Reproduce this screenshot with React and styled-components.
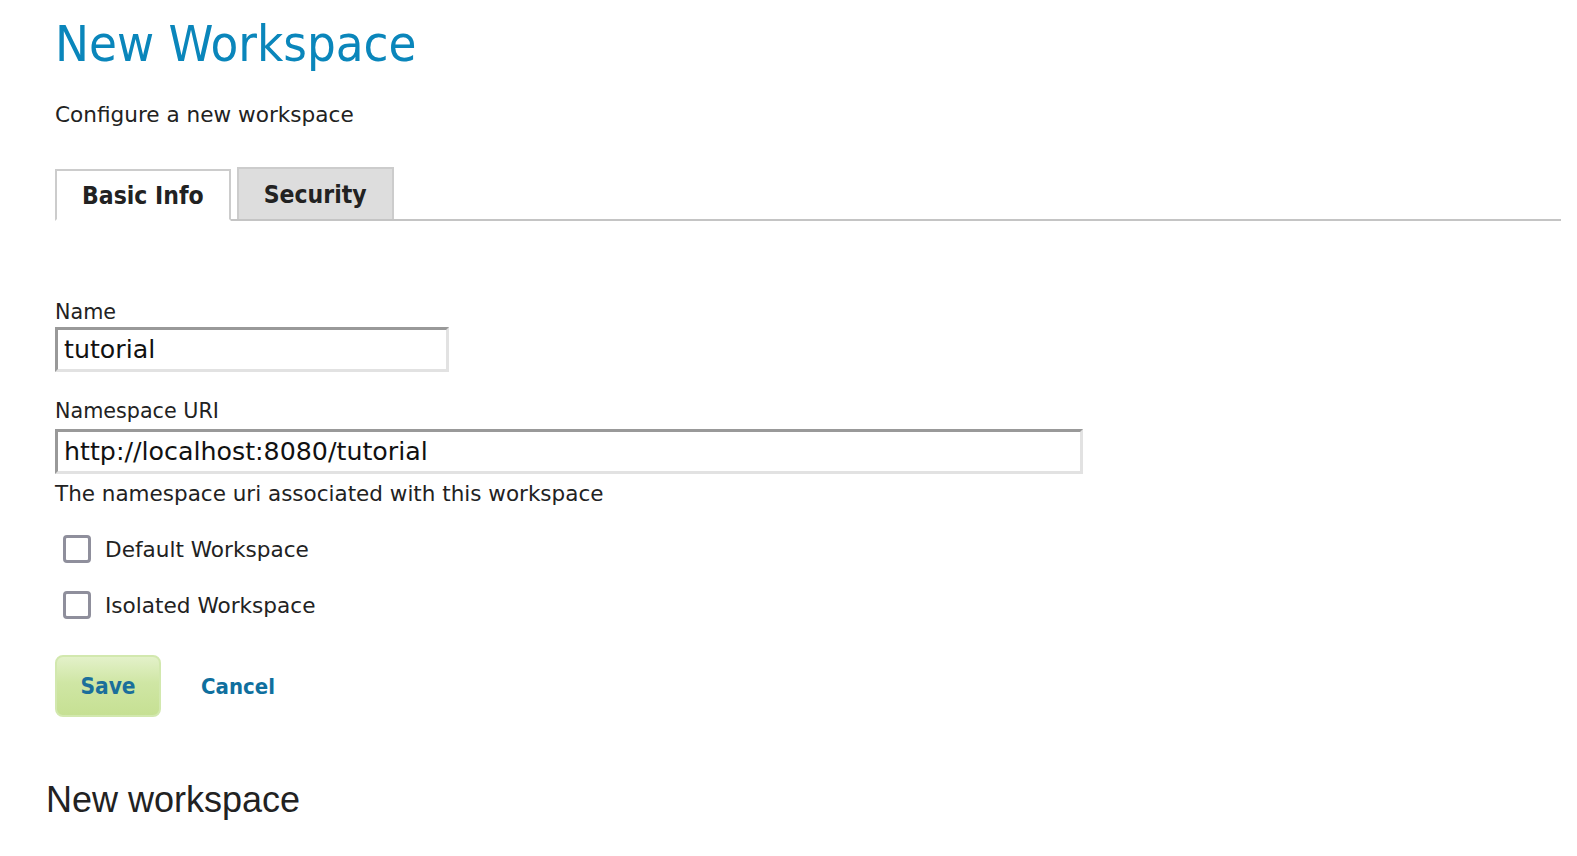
import React, { useState } from 'react';
import styled, { createGlobalStyle } from 'styled-components';

const GlobalStyle = createGlobalStyle`
  body {
    margin: 0;
    background: #ffffff;
    font-family: "DejaVu Sans", Verdana, sans-serif;
    color: #222222;
  }
`;

const Page = styled.div`
  padding: 0 16px 0 55px;
`;

const Title = styled.h1`
  margin: 0;
  padding-top: 12px;
  font-family: "DejaVu Sans Condensed", "DejaVu Sans", sans-serif;
  font-size: 50.5px;
  font-weight: normal;
  line-height: 64px;
  color: #0a86bb;
`;

const Subtitle = styled.p`
  margin: 25px 0 0 0;
  font-size: 21.6px;
  line-height: 28px;
  color: #222222;
`;

const TabBar = styled.div`
  display: flex;
  align-items: flex-end;
  gap: 6px;
  margin-top: 38px;
  border-bottom: 2px solid #c4c4c4;
`;

const Tab = styled.button`
  font-family: "DejaVu Sans Condensed", "DejaVu Sans", sans-serif;
  font-size: 24.5px;
  font-weight: bold;
  color: #222222;
  height: 52px;
  padding: 0 25px;
  margin-bottom: ${p => (p.active ? '-2px' : '0')};
  background: ${p => (p.active ? '#ffffff' : '#dddddd')};
  border: 2px solid #cccccc;
  border-bottom: ${p => (p.active ? '2px solid #ffffff' : 'none')};
  cursor: pointer;
`;

const Form = styled.form`
  margin-top: 76px;
`;

const Field = styled.div`
  display: flex;
  flex-direction: column;
  margin-bottom: 24px;
`;

const Label = styled.label`
  font-size: 20.7px;
  line-height: 30px;
  color: #222222;
`;

const TextInput = styled.input`
  box-sizing: border-box;
  width: ${p => p.width}px;
  height: 45px;
  margin-top: ${p => p.offset || 0}px;
  font-family: inherit;
  font-size: 25.3px;
  color: #111111;
  padding: 0 6px;
  border-style: solid;
  border-width: 3px;
  border-color: #999999 #e2e2e2 #e2e2e2 #999999;
  outline: none;
`;

const Help = styled.div`
  font-size: 21.5px;
  line-height: 30px;
  color: #222222;
  margin-top: 5px;
`;

const CheckRow = styled.label`
  display: flex;
  align-items: center;
  gap: 14px;
  padding-left: 8px;
  height: 28px;
  margin-top: ${p => p.gap}px;
  font-size: 21.6px;
  color: #222222;
  cursor: pointer;
`;

const Box = styled.span`
  box-sizing: border-box;
  width: 28px;
  height: 28px;
  border: 3px solid #8f8f9c;
  border-radius: 4px;
  background: ${p => (p.checked ? '#8f8f9c' : '#ffffff')};
`;

const Actions = styled.div`
  display: flex;
  align-items: center;
  gap: 40px;
  margin-top: 36px;
`;

const SaveButton = styled.button`
  box-sizing: border-box;
  width: 106px;
  height: 62px;
  font-family: "DejaVu Sans Condensed", "DejaVu Sans", sans-serif;
  font-size: 22.5px;
  font-weight: bold;
  color: #1b6f9b;
  background: linear-gradient(to bottom, #e3f1c9 0%, #cfe6a4 45%, #c6e093 100%);
  border: 2px solid #d2e8ae;
  border-radius: 8px;
  cursor: pointer;
`;

const CancelLink = styled.a`
  font-family: "DejaVu Sans Condensed", "DejaVu Sans", sans-serif;
  font-size: 22px;
  font-weight: bold;
  color: #0f6f9e;
  text-decoration: none;
  cursor: pointer;
`;

const Caption = styled.p`
  margin: 62px 0 0 -9px;
  font-family: "Liberation Sans", Arial, sans-serif;
  font-size: 36px;
  color: #222222;
`;

export default function App() {
  const [tab, setTab] = useState('basic');
  const [isDefault, setDefault] = useState(false);
  const [isolated, setIsolated] = useState(false);

  return (
    <Page>
      <GlobalStyle />
      <Title>New Workspace</Title>
      <Subtitle>Configure a new workspace</Subtitle>

      <TabBar>
        <Tab active={tab === 'basic'} onClick={() => setTab('basic')}>Basic Info</Tab>
        <Tab active={tab === 'security'} onClick={() => setTab('security')}>Security</Tab>
      </TabBar>

      <Form onSubmit={e => e.preventDefault()}>
        <Field>
          <Label>Name</Label>
          <TextInput width={394} defaultValue="tutorial" />
        </Field>
        <Field>
          <Label>Namespace URI</Label>
          <TextInput width={1028} offset={3} defaultValue="http://localhost:8080/tutorial" />
          <Help>The namespace uri associated with this workspace</Help>
        </Field>

        <CheckRow gap={26} onClick={() => setDefault(!isDefault)}>
          <Box checked={isDefault} />
          Default Workspace
        </CheckRow>
        <CheckRow gap={28} onClick={() => setIsolated(!isolated)}>
          <Box checked={isolated} />
          Isolated Workspace
        </CheckRow>

        <Actions>
          <SaveButton type="submit">Save</SaveButton>
          <CancelLink>Cancel</CancelLink>
        </Actions>
      </Form>

      <Caption>New workspace</Caption>
    </Page>
  );
}
